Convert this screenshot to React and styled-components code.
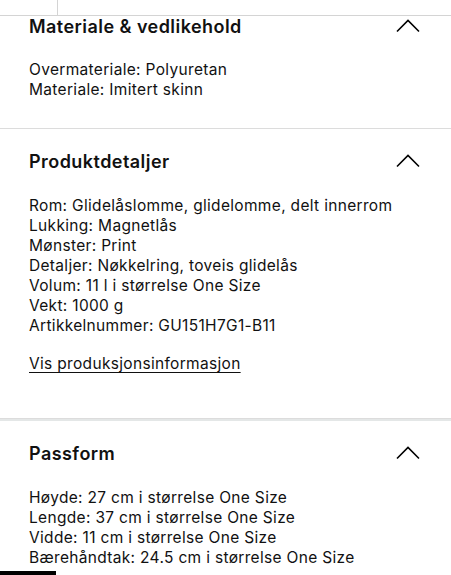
import React from "react"
import styled, { createGlobalStyle } from "styled-components"

const sections = [
  {
    title: "Materiale & vedlikehold",
    lines: ["Overmateriale: Polyuretan", "Materiale: Imitert skinn"],
    first: true,
  },
  {
    title: "Produktdetaljer",
    lines: [
      "Rom: Glidelåslomme, glidelomme, delt innerrom",
      "Lukking: Magnetlås",
      "Mønster: Print",
      "Detaljer: Nøkkelring, toveis glidelås",
      "Volum: 11 l i størrelse One Size",
      "Vekt: 1000 g",
      "Artikkelnummer: GU151H7G1-B11",
    ],
    link: "Vis produksjonsinformasjon",
  },
  {
    title: "Passform",
    lines: [
      "Høyde: 27 cm i størrelse One Size",
      "Lengde: 37 cm i størrelse One Size",
      "Vidde: 11 cm i størrelse One Size",
      "Bærehåndtak: 24.5 cm i størrelse One Size",
    ],
    thick: true,
  },
]

export default function App() {
  return (
    <>
      <Global />
      <Page>
        <TopStrip>
          <TopCell />
        </TopStrip>
        {sections.map((s) => (
          <Section key={s.title} $first={s.first} $thick={s.thick}>
            <Header $first={s.first}>
              <Title>{s.title}</Title>
              <Chevron width="24" height="14" viewBox="0 0 24 14">
                <path d="M1 12.5 L12 1.5 L23 12.5" fill="none" stroke="#000" strokeWidth="1.6" />
              </Chevron>
            </Header>
            <Body $first={s.first}>
              {s.lines.map((l) => (
                <Line key={l}>{l}</Line>
              ))}
            </Body>
            {s.link && <Link href="#">{s.link}</Link>}
          </Section>
        ))}
        <BottomBar />
      </Page>
    </>
  )
}

const Global = createGlobalStyle`
  body {
    margin: 0;
    background: #ffffff;
    font-family: Inter, "Liberation Sans", Arial, sans-serif;
    color: #111111;
  }
`

const Page = styled.div`
  width: 451px;
  height: 575px;
  overflow: hidden;
  position: relative;
  display: flex;
  flex-direction: column;
`

const TopStrip = styled.div`
  height: 15px;
  border-bottom: 1px solid #d4d4d4;
  display: flex;
  flex-shrink: 0;
`

const TopCell = styled.div`
  width: 57px;
  border-right: 1px solid #d4d4d4;
`

const Section = styled.section`
  padding: ${(p) => (p.$first ? "0" : "21px")} 0 28px 29px;
  border-bottom: ${(p) => (p.$thick ? "none" : "1px solid #dcdcdc")};
  border-top: ${(p) => (p.$thick ? "2px solid #e4e7e7" : "none")};
  flex-shrink: 0;
`

const Header = styled.div`
  display: flex;
  align-items: center;
  justify-content: space-between;
  padding-right: 31px;
  height: 24px;
  margin-top: ${(p) => (p.$first ? "-1px" : "0")};
`

const Title = styled.h2`
  margin: 0;
  font-size: 18px;
  font-weight: 600;
  line-height: 24px;
  letter-spacing: 0.45px;
  color: #111111;
`

const Chevron = styled.svg`
  display: block;
  margin-top: -2px;
`

const Body = styled.div`
  margin-top: ${(p) => (p.$first ? "21px" : "22px")};
  display: flex;
  flex-direction: column;
`

const Line = styled.div`
  font-size: 15.5px;
  line-height: 20px;
  letter-spacing: 0.32px;
  color: #111111;
`

const Link = styled.a`
  display: inline-block;
  align-self: flex-start;
  margin-top: 18px;
  margin-bottom: 16px;
  font-size: 15.5px;
  line-height: 20px;
  letter-spacing: 0.32px;
  color: #111111;
  text-decoration: underline;
  text-underline-offset: 3px;
`

const BottomBar = styled.div`
  position: absolute;
  left: 0;
  bottom: 0;
  width: 56px;
  height: 4px;
  background: #000000;
`
